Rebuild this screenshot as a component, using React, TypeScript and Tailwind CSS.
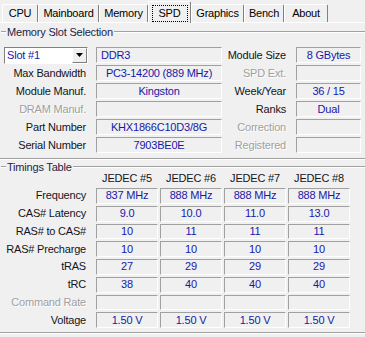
import React from "react";

const tabs = [
  { name: "CPU", w: "w-[36px]" },
  { name: "Mainboard", w: "w-[61px]" },
  { name: "Memory", w: "w-[49px]" },
  { name: "SPD", w: "w-[43px]", active: true },
  { name: "Graphics", w: "w-[53px]" },
  { name: "Bench", w: "w-[40px]" },
  { name: "About", w: "w-[44px]" },
];

const timings = [
  { label: "Frequency", values: ["837 MHz", "888 MHz", "888 MHz", "888 MHz"] },
  { label: "CAS# Latency", values: ["9.0", "10.0", "11.0", "13.0"] },
  { label: "RAS# to CAS#", values: ["10", "11", "11", "11"] },
  { label: "RAS# Precharge", values: ["10", "10", "10", "10"] },
  { label: "tRAS", values: ["27", "29", "29", "29"] },
  { label: "tRC", values: ["38", "40", "40", "40"] },
  { label: "Command Rate", values: ["", "", "", ""], dim: true },
  { label: "Voltage", values: ["1.50 V", "1.50 V", "1.50 V", "1.50 V"] },
];

const Box = ({ children, className = "" }: any) => (
  <div
    className={`flex h-full items-center border border-[#a0a0a0] border-b-white border-r-white leading-none text-[#1818a8] ${className}`}
  >
    {children}
  </div>
);

const Label = ({ children, dim, className = "" }: any) => (
  <div
    className={`text-right leading-none ${
      dim ? "text-[#a0a0a0] [text-shadow:1px_1px_0_#ffffff]" : "text-[#141420]"
    } ${className}`}
  >
    {children}
  </div>
);

const Etch = ({ className = "" }: any) => (
  <div className={`h-[2px] border-t border-t-[#a0a0a0] border-b border-b-white ${className}`} />
);

const GroupTitle = ({ title, className = "" }: any) => (
  <div className={`flex h-[12px] items-center ${className}`}>
    <Etch className="ml-[1px] w-[5px]" />
    <span className="px-[1px] leading-none text-[#1c2448]">{title}</span>
    <Etch className="flex-1" />
  </div>
);

const Row = ({ children }: any) => <div className="flex h-[16px] items-center">{children}</div>;

export default function App() {
  return (
    <div className="h-[337px] w-[365px] overflow-hidden bg-[#f0f0f0] font-['Liberation_Sans',Arial,sans-serif] text-[11px] tracking-[-0.2px] text-black">
      {/* tabs */}
      <div className="flex h-[23px] items-end border-b border-b-white pl-[2px]">
        {tabs.map((t) =>
          t.active ? (
            <div
              key={t.name}
              className={`${t.w} relative -mb-px flex h-[22px] items-start justify-center rounded-t-[2px] border-l border-r border-t border-l-white border-r-[#808080] border-t-white bg-[#f0f0f0] pt-[3px]`}
            >
              <div className="flex h-[17px] w-[36px] items-center justify-center border border-dotted border-black leading-none">
                {t.name}
              </div>
            </div>
          ) : (
            <div
              key={t.name}
              className={`${t.w} flex h-[18px] items-center justify-center rounded-t-[2px] border-l border-r border-t border-l-white border-r-[#808080] border-t-white leading-none`}
            >
              {t.name}
            </div>
          ),
        )}
      </div>

      {/* memory slot selection */}
      <GroupTitle title="Memory Slot Selection" className="mt-[2px] h-[14px]" />
      <div className="mt-[8px] flex flex-col gap-[2px]">
        <Row>
          <div className="ml-[4px] flex h-[17px] w-[84px] items-center border border-[#808080] border-b-white border-r-white bg-white">
            <span className="flex-1 pl-[2px] leading-none text-[#1818a8]">Slot #1</span>
            <div className="flex h-[15px] w-[15px] items-center justify-center border border-white border-b-[#808080] border-r-[#808080] bg-[#f0f0f0]">
              <svg width="7" height="4" viewBox="0 0 7 4">
                <path d="M0 0h7L3.5 4z" fill="#000" />
              </svg>
            </div>
          </div>
          <Box className="ml-[8px] w-[126px] pl-[4px]">DDR3</Box>
          <Label className="w-[64px]">Module Size</Label>
          <Box className="ml-[10px] w-[65px] justify-center">8 GBytes</Box>
        </Row>
        <Row>
          <Label className="w-[86px]">Max Bandwidth</Label>
          <Box className="ml-[10px] w-[126px] justify-center">PC3-14200 (889 MHz)</Box>
          <Label dim className="w-[64px]">SPD Ext.</Label>
          <Box className="ml-[10px] w-[65px] justify-center"></Box>
        </Row>
        <Row>
          <Label className="w-[86px]">Module Manuf.</Label>
          <Box className="ml-[10px] w-[126px] justify-center">Kingston</Box>
          <Label className="w-[64px]">Week/Year</Label>
          <Box className="ml-[10px] w-[65px] justify-center">36 / 15</Box>
        </Row>
        <Row>
          <Label dim className="w-[86px]">DRAM Manuf.</Label>
          <Box className="ml-[10px] w-[126px] justify-center"></Box>
          <Label className="w-[64px]">Ranks</Label>
          <Box className="ml-[10px] w-[65px] justify-center">Dual</Box>
        </Row>
        <Row>
          <Label className="w-[86px]">Part Number</Label>
          <Box className="ml-[10px] w-[126px] justify-center">KHX1866C10D3/8G</Box>
          <Label dim className="w-[64px]">Correction</Label>
          <Box className="ml-[10px] w-[65px] justify-center"></Box>
        </Row>
        <Row>
          <Label className="w-[86px]">Serial Number</Label>
          <Box className="ml-[10px] w-[126px] justify-center">7903BE0E</Box>
          <Label dim className="w-[64px]">Registered</Label>
          <Box className="ml-[10px] w-[65px] justify-center"></Box>
        </Row>
      </div>
      <Etch className="mt-[5px]" />

      {/* timings table */}
      <GroupTitle title="Timings Table" className="mt-[1px]" />
      <div className="-mt-px flex h-[13px] items-center">
        <div className="w-[96px]" />
        <div className="grid grid-cols-[62px_62px_62px_62px] gap-x-[2px]">
          {["JEDEC #5", "JEDEC #6", "JEDEC #7", "JEDEC #8"].map((h) => (
            <div key={h} className="text-center leading-none text-[#141420]">
              {h}
            </div>
          ))}
        </div>
      </div>
      <div className="mt-[3px] grid auto-rows-[15.75px] gap-y-[2px]">
        {timings.map((r) => (
          <div key={r.label} className="flex h-full items-center">
            <Label dim={r.dim} className="w-[86px]">
              {r.label}
            </Label>
            <div className="ml-[10px] grid h-full grid-cols-[62px_62px_62px_62px] gap-x-[2px]">
              {r.values.map((v, i) => (
                <Box key={i} className="justify-center">
                  {v}
                </Box>
              ))}
            </div>
          </div>
        ))}
      </div>
      <Etch className="mt-[4px]" />
    </div>
  );
}
